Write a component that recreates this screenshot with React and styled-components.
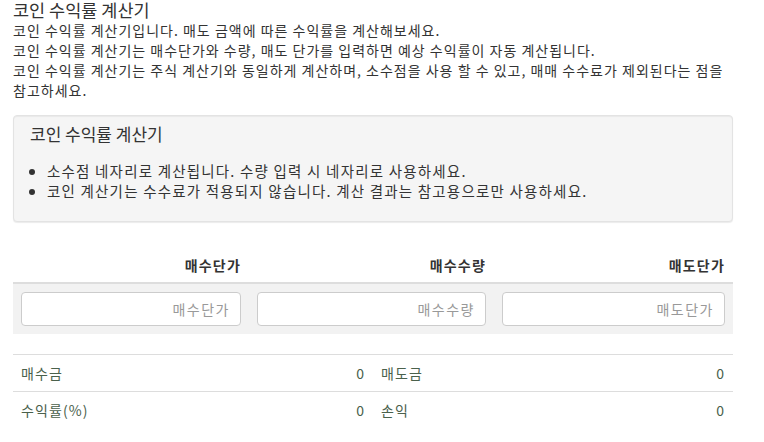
import React from 'react'
import styled, { createGlobalStyle } from 'styled-components'

const GlobalStyle = createGlobalStyle`
  body {
    margin: 0;
    background: #fff;
    font-family: "Noto Sans CJK KR", "Noto Sans", sans-serif;
    color: #333;
    word-break: keep-all;
  }
`

const Page = styled.div`
  width: 720px;
  padding: 0 13px;
`

const Title = styled.h1`
  margin: 0;
  font-size: 17.5px;
  font-weight: 400;
  line-height: 20px;
`

const Intro = styled.p`
  margin: 0;
  font-size: 14px;
  line-height: 20px;
  letter-spacing: 1px;
`

const Well = styled.div`
  margin-top: 15px;
  background: #f5f5f5;
  border: 1px solid #e3e3e3;
  border-radius: 4px;
  box-shadow: inset 0 1px 1px rgba(0, 0, 0, 0.05), 0 1px 1px rgba(0, 0, 0, 0.08);
  padding: 8px 16px 20px;
`

const WellTitle = styled.h4`
  margin: 0;
  font-size: 17px;
  font-weight: 400;
  line-height: 20px;
`

const Notes = styled.ul`
  margin: 17px 0 0;
  padding-left: 17px;
  font-size: 14.5px;
  line-height: 20px;
  letter-spacing: 1.2px;
`

const InputTable = styled.div`
  margin-top: 26px;
  display: grid;
  grid-template-columns: 236px 245px 239px;
`

const HeadCell = styled.div`
  padding: 7px 8px;
  line-height: 20px;
  font-size: 14px;
  font-weight: 700;
  letter-spacing: 1.2px;
  text-align: right;
  border-bottom: 2px solid #ddd;
`

const InputCell = styled.div`
  background: #f2f2f2;
  padding: 8px;
`

const Field = styled.input`
  box-sizing: border-box;
  width: 100%;
  height: 34px;
  padding: 6px 10px;
  border: 1px solid #ccc;
  border-radius: 4px;
  background: #fff;
  font-family: inherit;
  font-size: 14px;
  letter-spacing: 1.5px;
  text-align: right;
  color: #555;
  outline: none;
  &::placeholder {
    color: #999;
  }
`

const ResultTable = styled.div`
  margin-top: 20px;
  border-top: 1px solid #ddd;
`

const ResultRow = styled.div`
  display: grid;
  grid-template-columns: 1fr 1fr;
  border-bottom: ${(p) => (p.$last ? 'none' : '1px solid #ddd')};
`

const ResultCell = styled.div`
  display: flex;
  justify-content: space-between;
  padding: 8px;
  font-size: 14px;
  line-height: 20px;
  letter-spacing: 1.1px;
  color: #4a614c;
`

const rows = [
  [['매수금', 0], ['매도금', 0]],
  [['수익률(%)', 0], ['손익', 0]],
]

export default function App() {
  return (
    <Page>
      <GlobalStyle />
      <Title>코인 수익률 계산기</Title>
      <Intro>
        코인 수익률 계산기입니다. 매도 금액에 따른 수익률을 계산해보세요.
        <br />
        코인 수익률 계산기는 매수단가와 수량, 매도 단가를 입력하면 예상 수익률이 자동 계산됩니다.
        <br />
        코인 수익률 계산기는 주식 계산기와 동일하게 계산하며, 소수점을 사용 할 수 있고, 매매 수수료가 제외된다는 점을 참고하세요.
      </Intro>
      <Well>
        <WellTitle>코인 수익률 계산기</WellTitle>
        <Notes>
          <li>소수점 네자리로 계산됩니다. 수량 입력 시 네자리로 사용하세요.</li>
          <li>코인 계산기는 수수료가 적용되지 않습니다. 계산 결과는 참고용으로만 사용하세요.</li>
        </Notes>
      </Well>
      <InputTable>
        <HeadCell>매수단가</HeadCell>
        <HeadCell>매수수량</HeadCell>
        <HeadCell>매도단가</HeadCell>
        <InputCell><Field placeholder="매수단가" /></InputCell>
        <InputCell><Field placeholder="매수수량" /></InputCell>
        <InputCell><Field placeholder="매도단가" /></InputCell>
      </InputTable>
      <ResultTable>
        {rows.map((row, i) => (
          <ResultRow key={i} $last={i === rows.length - 1}>
            {row.map(([label, value]) => (
              <ResultCell key={label}>
                <span>{label}</span>
                <span>{value}</span>
              </ResultCell>
            ))}
          </ResultRow>
        ))}
      </ResultTable>
    </Page>
  )
}
